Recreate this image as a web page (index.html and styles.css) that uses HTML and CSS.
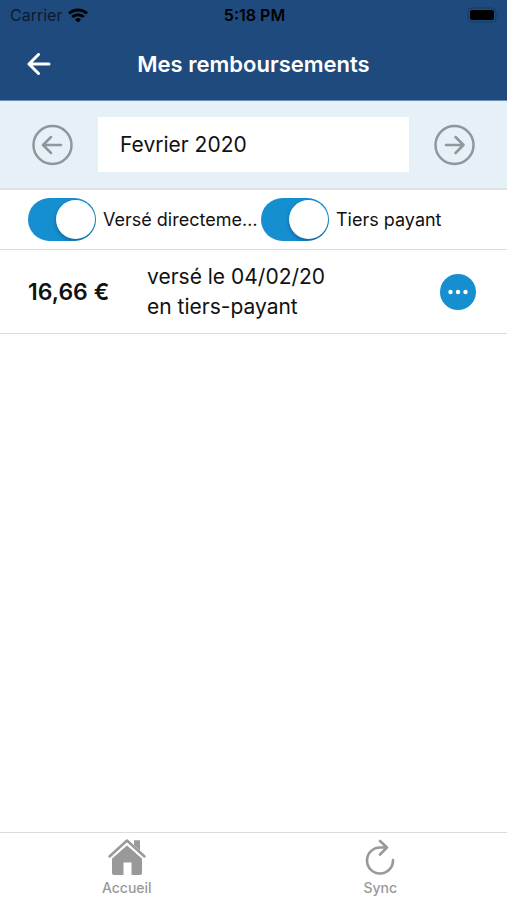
FILE: index.html
```html
<!DOCTYPE html>
<html lang="fr">
<head>
    <meta charset="UTF-8">
    <meta name="viewport" content="width=device-width, initial-scale=1.0">
    <title>Mes remboursements</title>
    <link rel="stylesheet" href="styles.css">
</head>
<body>
    <header class="header">
        <div class="status-bar">
            <div class="carrier">
                <span>Carrier</span>
                <svg width="20" height="15" viewBox="0 0 20 15" fill="none" stroke="#000" stroke-width="3">
                    <path d="M1 5.5a13 13 0 0 1 18 0M4.2 9a8.3 8.3 0 0 1 11.6 0"/>
                    <path d="M10 14.5l-3-3a4.3 4.3 0 0 1 6 0z" fill="#000" stroke="none"/>
                </svg>
            </div>
            <span class="clock">5:18 PM</span>
            <svg class="battery" width="32" height="16" viewBox="0 0 32 16">
                <rect x="1" y="1" width="28" height="14" rx="4" fill="none" stroke="#173a63"/>
                <rect x="3" y="3" width="24" height="10" rx="2"/>
                <path d="M30.5 6v4q1.500-2 0-4z" fill="#173a63"/>
            </svg>
        </div>
        <div class="title-bar">
            <button class="icon-btn" type="button" aria-label="Retour">
                <svg width="24" height="22" viewBox="0 0 24 22" fill="none" stroke="#fff" stroke-width="3" stroke-linecap="round" stroke-linejoin="round">
                    <path d="M22 11H2M11.500 1.500L2 11l9.500 9.500"/>
                </svg>
            </button>
            <h1 class="title">Mes remboursements</h1>
        </div>
    </header>

    <main class="content">
        <div class="month-bar">
            <button class="icon-btn" type="button" aria-label="Mois précédent">
                <svg width="42" height="42" viewBox="0 0 42 42" fill="none" stroke="#8f969c" stroke-width="2.5" stroke-linecap="round" stroke-linejoin="round">
                    <circle cx="21.500" cy="21" r="19"/>
                    <path d="M30 21H12.500M20 13l-8 8 8 8"/>
                </svg>
            </button>
            <input class="month-input" type="text" value="Fevrier 2020" aria-label="Mois" readonly>
            <button class="icon-btn" type="button" aria-label="Mois suivant">
                <svg width="42" height="42" viewBox="0 0 42 42" fill="none" stroke="#8f969c" stroke-width="2.5" stroke-linecap="round" stroke-linejoin="round">
                    <circle cx="20.500" cy="21" r="19"/>
                    <path d="M12 21h17.500M21.500 13l8 8-8 8"/>
                </svg>
            </button>
        </div>

        <div class="filters">
            <div class="filter">
                <input class="switch" type="checkbox" id="direct" checked>
                <label class="filter-label" for="direct">Versé directement à l'assuré</label>
            </div>
            <div class="filter">
                <input class="switch" type="checkbox" id="tiers" checked>
                <label class="filter-label" for="tiers">Tiers payant</label>
            </div>
        </div>

        <ul class="list">
            <li class="item">
                <strong class="amount">16,66 €</strong>
                <p class="detail">versé le 04/02/20<br>en tiers-payant</p>
                <button class="icon-btn" type="button" aria-label="Détails">
                    <svg width="36" height="36" viewBox="0 0 36 36">
                        <circle cx="18" cy="18" r="18" fill="#168fd1"/>
                        <g fill="#fff">
                            <circle cx="10.500" cy="18" r="2.2"/>
                            <circle cx="18" cy="18" r="2.2"/>
                            <circle cx="25.500" cy="18" r="2.2"/>
                        </g>
                    </svg>
                </button>
            </li>
        </ul>
    </main>

    <nav class="tabs">
        <a class="tab" href="#accueil">
            <svg width="40" height="38" viewBox="0 0 40 38">
                <path fill="#999" d="M20 7.500l15 13V35q0 2-2 2h-8.500V24.500h-8V37H7q-2 0-2-2V20.500z"/>
                <path fill="#999" d="M27 2.500h6v11l-6-5.500z"/>
                <path fill="none" stroke="#fff" stroke-width="5" d="M2.500 19.500L20 3l17.500 16.500"/>
                <path fill="none" stroke="#999" stroke-width="2.5" stroke-linecap="round" stroke-linejoin="round" d="M2.500 18.500L20 2.500l17.500 16"/>
                <path fill="#999" d="M27 2.500h6v10l-6-5.500z"/>
            </svg>
            <span>Accueil</span>
        </a>
        <a class="tab" href="#sync">
            <svg width="40" height="38" viewBox="0 0 40 38" fill="none" stroke="#999" stroke-width="2.6" stroke-linecap="round" stroke-linejoin="round">
                <path d="M33 22A13 13 0 1 1 20 9.500h6.500M20 3l7 6.500-7 7"/>
            </svg>
            <span>Sync</span>
        </a>
    </nav>
</body>
</html>
```
FILE: styles.css
```css
* {
    margin: 0;
    padding: 0;
    box-sizing: border-box;
}

body {
    font-family: Inter, "Liberation Sans", sans-serif;
    background: #fff;
    color: #111;
    min-height: 100vh;
    display: flex;
    flex-direction: column;
}

svg {
    display: block;
}

.icon-btn {
    background: none;
    border: none;
    cursor: pointer;
}

.header {
    background: #1f4a7e;
    border-bottom: 1px solid #6b8fb8;
}

.status-bar {
    display: grid;
    grid-template-columns: 1fr auto 1fr;
    align-items: center;
    height: 30px;
    padding: 0 8px 0 10px;
    font-size: 16px;
    color: #000;
}

.carrier {
    display: flex;
    align-items: center;
    gap: 6px;
    color: #0a1a2e;
}

.clock {
    font-weight: 600;
}

.battery {
    justify-self: end;
}

.title-bar {
    display: grid;
    grid-template-columns: 24px 1fr 24px;
    align-items: center;
    padding: 19px 27px 21px;
}

.title {
    font-size: 22px;
    font-weight: 600;
    line-height: 30px;
    text-align: center;
    color: #fff;
}

.content {
    flex: 1;
}

.month-bar {
    display: flex;
    align-items: center;
    gap: 25px;
    padding: 16px 31px;
    background: #e5f0f7;
    border-bottom: 2px solid #dfe3e5;
}

.month-input {
    flex: 1;
    min-width: 0;
    height: 55px;
    padding: 0 22px;
    border: none;
    background: #fff;
    font-family: inherit;
    font-size: 21px;
    color: #111;
}

.filters {
    display: grid;
    grid-template-columns: 1fr 1fr;
    padding: 8px 13px 8px 28px;
    border-bottom: 1px solid #dcdcdc;
}

.filter {
    display: flex;
    align-items: center;
    gap: 7px;
    min-width: 0;
}

.switch {
    appearance: none;
    flex: none;
    display: flex;
    justify-content: flex-end;
    width: 68px;
    height: 43px;
    padding: 2px 1px;
    border-radius: 22px;
    background: #168fd1;
    overflow: hidden;
    cursor: pointer;
}

.switch::before {
    content: "";
    width: 39px;
    height: 39px;
    border-radius: 50%;
    background: #fff;
    box-shadow: 0 2px 4px rgba(0, 0, 0, 0.3);
}

.switch:not(:checked) {
    justify-content: flex-start;
    background: #ccc;
}

.filter-label {
    overflow: hidden;
    white-space: nowrap;
    text-overflow: ellipsis;
    font-size: 18px;
    line-height: 28px;
}

.list {
    list-style: none;
}

.item {
    display: flex;
    align-items: center;
    padding: 12px 31px 11px 28px;
    border-bottom: 1px solid #dcdcdc;
}

.amount {
    width: 119px;
    font-size: 23px;
    font-weight: 600;
}

.detail {
    flex: 1;
    font-size: 21px;
    line-height: 30px;
}

.tabs {
    display: grid;
    grid-template-columns: 1fr 1fr;
    border-top: 1px solid #dcdcdc;
}

.tab {
    display: flex;
    flex-direction: column;
    align-items: center;
    gap: 2px;
    padding: 5px 0 2px;
    font-size: 14px;
    font-weight: 500;
    line-height: 20px;
    color: #999;
    text-decoration: none;
}
```
